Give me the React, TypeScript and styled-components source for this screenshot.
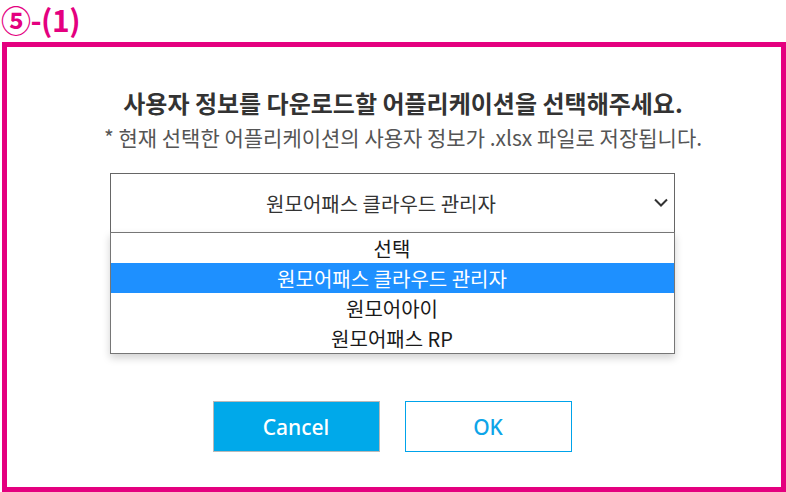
import React from "react";
import styled, { createGlobalStyle } from "styled-components";

const Global = createGlobalStyle`
  html, body { margin: 0; padding: 0; background: #ffffff; }
  body { font-family: "Noto Sans CJK KR", "Noto Sans", sans-serif; width: 786px; height: 492px; overflow: hidden; }
`;

const Page = styled.div`
  display: flex;
  flex-direction: column;
  width: 786px;
  height: 492px;
`;

const StepTitle = styled.div`
  height: 42px;
  display: flex;
  align-items: flex-start;
  padding-left: 1px;
  font-size: 30px;
  font-weight: 700;
  line-height: 38px;
  color: #e4007f;
  letter-spacing: -0.5px;
  white-space: nowrap;
  box-sizing: border-box;
`;

const Frame = styled.div`
  margin-left: 2px;
  width: 784px;
  height: 450px;
  box-sizing: border-box;
  border: 5px solid #e4007f;
  display: flex;
  flex-direction: column;
  align-items: center;
  padding-top: 39px;
`;

const Heading = styled.h2`
  margin: 0 0 0 18px;
  font-size: 24px;
  font-weight: 700;
  line-height: 34px;
  color: #333333;
`;

const Note = styled.p`
  margin: 2px 0 0 18px;
  font-size: 21px;
  font-weight: 400;
  line-height: 30px;
  color: #555555;
`;

const SelectWrap = styled.div`
  position: relative;
  margin-top: 21px;
  margin-left: -4px;
  width: 565px;
`;

const SelectBox = styled.div`
  height: 60px;
  box-sizing: border-box;
  border: 1px solid #666666;
  border-bottom-color: #888888;
  display: flex;
  align-items: center;
  justify-content: center;
  padding-right: 22px;
  font-size: 20px;
  color: #333333;
  background: #ffffff;
`;

const Chevron = styled.svg`
  position: absolute;
  right: 6px;
  top: 24px;
`;

const List = styled.div`
  position: absolute;
  left: 0;
  right: 0;
  top: 59px;
  box-sizing: border-box;
  border: 1px solid #767676;
  background: #ffffff;
  box-shadow: 0 4px 8px rgba(0, 0, 0, 0.18);
  display: flex;
  flex-direction: column;
`;

const Option = styled.div<{ $active?: boolean }>`
  height: 30px;
  display: flex;
  align-items: center;
  justify-content: center;
  font-size: 20px;
  color: ${(p) => (p.$active ? "#ffffff" : "#1a1a1a")};
  background: ${(p) => (p.$active ? "#1e90ff" : "transparent")};
`;

const Buttons = styled.div`
  display: flex;
  gap: 25px;
  margin-top: 168px;
  margin-left: -4px;
`;

const Button = styled.div<{ $primary?: boolean }>`
  width: 167px;
  height: 51px;
  box-sizing: border-box;
  display: flex;
  align-items: center;
  justify-content: center;
  font-family: "Noto Sans", "Noto Sans CJK KR", sans-serif;
  font-size: 21px;
  font-weight: 500;
  cursor: pointer;
  border: 1.5px solid ${(p) => (p.$primary ? "#b9b9b9" : "#00a3ea")};
  background: ${(p) => (p.$primary ? "#00a9ea" : "#ffffff")};
  color: ${(p) => (p.$primary ? "#ffffff" : "#0ea5e8")};
`;

const options = ["선택", "원모어패스 클라우드 관리자", "원모어아이", "원모어패스 RP"];

export default function App() {
  return (
    <Page>
      <Global />
      <StepTitle>⑤-(1)</StepTitle>
      <Frame>
        <Heading>사용자 정보를 다운로드할 어플리케이션을 선택해주세요.</Heading>
        <Note>* 현재 선택한 어플리케이션의 사용자 정보가 .xlsx 파일로 저장됩니다.</Note>
        <SelectWrap>
          <SelectBox>원모어패스 클라우드 관리자</SelectBox>
          <Chevron width="16" height="11" viewBox="0 0 16 11">
            <path d="M2 2.5 L8 8.5 L14 2.5" fill="none" stroke="#333" strokeWidth="2" />
          </Chevron>
          <List>
            {options.map((o, i) => (
              <Option key={o} $active={i === 1}>
                {o}
              </Option>
            ))}
          </List>
        </SelectWrap>
        <Buttons>
          <Button role="button" $primary>Cancel</Button>
          <Button role="button">OK</Button>
        </Buttons>
      </Frame>
    </Page>
  );
}
